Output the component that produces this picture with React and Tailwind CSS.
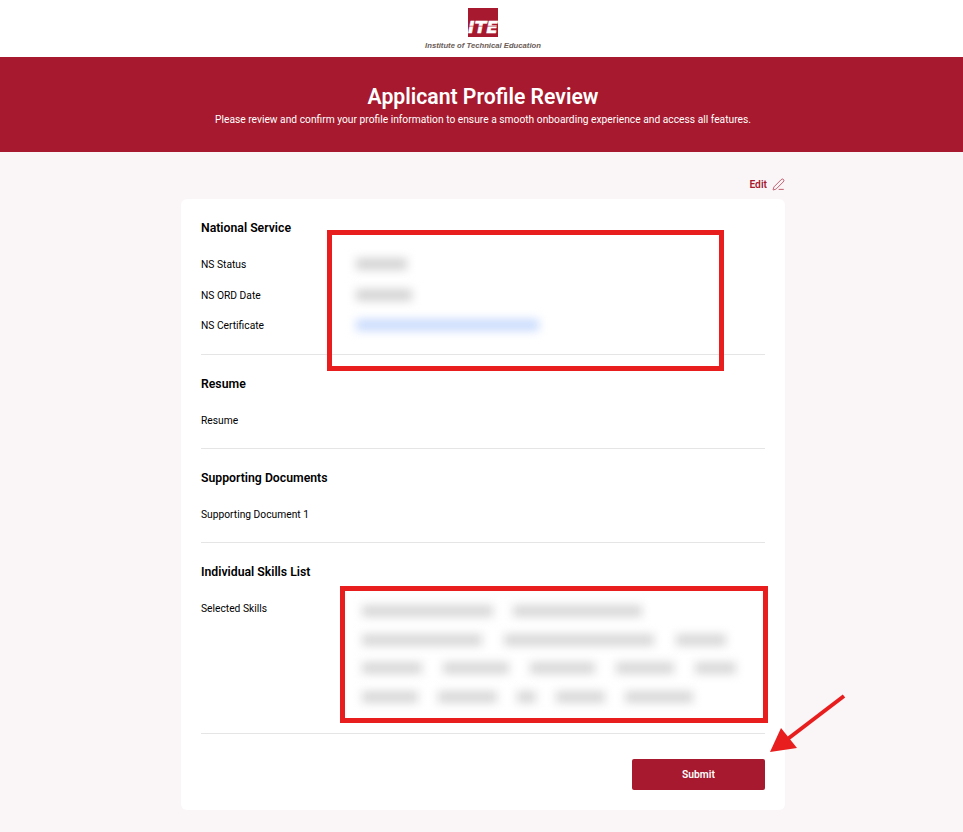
import React from 'react';
import { PenLine } from 'lucide-react';

const skillRows = [
  ['w-[131px]', 'w-[129px]'],
  ['w-[120px]', 'w-[150px]', 'w-[50px]'],
  ['w-[60px]', 'w-[66px]', 'w-[65px]', 'w-[58px]', 'w-[41px]'],
  ['w-[56px]', 'w-[59px]', 'w-[19px]', 'w-[49px]', 'w-[68px]'],
];

const rowGaps = ['gap-x-[20px]', 'gap-x-[22px]', 'gap-x-[21px]', 'gap-x-[20px]'];

const Logo = () => (
  <div className="flex flex-col items-center">
    <svg width="30" height="29" viewBox="0 0 30 29" className="block">
      <rect width="30" height="29" fill="#A6192E" />
      <text
        x="15"
        y="25"
        textAnchor="middle"
        fill="#ffffff"
        stroke="#ffffff"
        strokeWidth="0.4"
        fontFamily="'DejaVu Sans', sans-serif"
        fontSize="15"
        fontWeight="700"
        fontStyle="italic"
        textLength="30"
        lengthAdjust="spacingAndGlyphs"
      >
        ITE
      </text>
      <line x1="0" y1="18.2" x2="30" y2="18.2" stroke="#A6192E" strokeWidth="0.6" />
    </svg>
    <span className="mt-[4px] text-[7.7px] leading-[9px] font-bold italic text-[#6b5d57] font-['Liberation_Sans',sans-serif] whitespace-nowrap">
      Institute of Technical Education
    </span>
  </div>
);

const Blur = ({ className }) => <div className={`h-[12px] blur-[5px] ${className}`} />;

const Row = ({ label, children }) => (
  <div className="flex h-5 items-center">
    <span className="w-[155px] shrink-0 pt-[2px] text-[10.25px] text-black">{label}</span>
    {children}
  </div>
);

const Section = ({ title, className, children }) => (
  <section className={`border-b border-[#e5e5e5] ${className}`}>
    <h2 className="mb-[18px] pt-px text-[12.25px] leading-4 font-semibold text-black">{title}</h2>
    {children}
  </section>
);

const App = () => {
  return (
    <div className="relative min-h-[832px] bg-[#faf6f8] font-['Roboto',sans-serif]">
      <header className="flex h-[57px] justify-center bg-white pt-2 pl-[3px]">
        <Logo />
      </header>

      <div className="flex h-[95px] flex-col items-center bg-[#A6192E] pt-[27px] pl-[3px] text-white">
        <h1 className="text-[21.2px] leading-[26px] font-semibold">Applicant Profile Review</h1>
        <p className="mt-[2px] text-[10.25px] leading-4">
          Please review and confirm your profile information to ensure a smooth onboarding experience and access all features.
        </p>
      </div>

      <main className="ml-[181px] w-[604px] pt-[24px] pb-[22px]">
        <div className="mb-[7px] flex h-4 items-center justify-end gap-[5px] pt-[1px] text-[#A6192E]">
          <span className="text-[10.25px] font-semibold">Edit</span>
          <PenLine size={13} strokeWidth={1.25} />
        </div>

        <div className="rounded-md bg-white px-5 pt-5 pb-5">
          <Section title="National Service" className="pb-[19px]">
            <div className="flex flex-col gap-[10.5px]">
              <Row label="NS Status">
                <Blur className="w-[51px] bg-[#d4d4d4]" />
              </Row>
              <Row label="NS ORD Date">
                <Blur className="w-[56px] bg-[#d4d4d4]" />
              </Row>
              <Row label="NS Certificate">
                <Blur className="w-[183px] bg-[#cbdcfd]" />
              </Row>
            </div>
          </Section>

          <Section title="Resume" className="pt-5 pb-[18px]">
            <Row label="Resume" />
          </Section>

          <Section title="Supporting Documents" className="pt-5 pb-[18px]">
            <Row label="Supporting Document 1" />
          </Section>

          <Section title="Individual Skills List" className="pt-5 pb-[26px]">
            <div className="flex">
              <span className="h-5 w-[155px] shrink-0 pt-px text-[10.25px] leading-5 text-black">Selected Skills</span>
              <div className="flex flex-col gap-[8.7px] pt-[3px] pl-[6px]">
                {skillRows.map((row, i) => (
                  <div key={i} className={`flex h-5 items-center ${rowGaps[i]}`}>
                    {row.map((w, j) => (
                      <Blur key={j} className={`${w} bg-[#d8d8d8]`} />
                    ))}
                  </div>
                ))}
              </div>
            </div>
          </Section>

          <div className="flex justify-end pt-[25px]">
            <button className="h-[31px] w-[133px] rounded-[2px] bg-[#A6192E] text-[10.25px] font-semibold text-white">
              Submit
            </button>
          </div>
        </div>
      </main>

      {/* annotations drawn over the screenshot */}
      <div className="absolute top-[230px] left-[327px] h-[141px] w-[397px] border-[5px] border-[#e81e1e]" />
      <div className="absolute top-[586px] left-[340px] h-[137px] w-[428px] border-[5px] border-[#e81e1e]" />
      <svg className="absolute top-[690px] left-[765px]" width="85" height="68" viewBox="0 0 85 68">
        <line x1="79" y1="6" x2="20" y2="51" stroke="#e81e1e" strokeWidth="4" />
        <polygon points="5,62 16,38 32,58" fill="#e81e1e" />
      </svg>
    </div>
  );
};

export default App;
